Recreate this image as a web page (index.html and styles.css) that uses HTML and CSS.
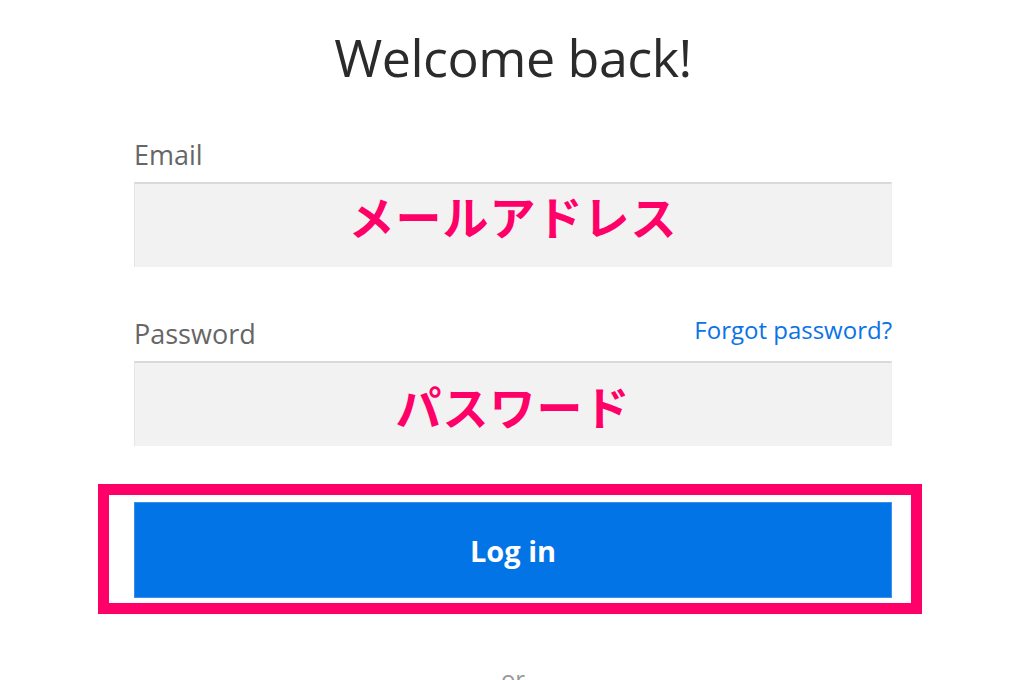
FILE: index.html
```html
<!DOCTYPE html>
<html lang="en">
<head>
<meta charset="utf-8">
<title>Welcome back</title>
<link rel="stylesheet" href="styles.css">
</head>
<body>
<main class="page">
  <div class="form">
    <h1 class="title">Welcome back!</h1>
    <div class="field">
      <div class="label-row"><label class="label">Email</label></div>
      <div class="input"><span class="hint">メールアドレス</span></div>
    </div>
    <div class="field field-pw">
      <div class="label-row">
        <label class="label">Password</label>
        <a class="forgot" href="#">Forgot password?</a>
      </div>
      <div class="input input-pw"><span class="hint">パスワード</span></div>
    </div>
    <div class="submit-wrap">
      <button class="btn" type="button">Log in</button>
      <span class="highlight"></span>
    </div>
    <div class="or">or</div>
  </div>
</main>
</body>
</html>
```
FILE: styles.css
```css
html, body {
  margin: 0;
  padding: 0;
  background: #ffffff;
}
body {
  width: 1020px;
  height: 680px;
  overflow: hidden;
  font-family: "Open Sans", "Noto Sans", sans-serif;
}
.page {
  padding-left: 134px;
}
.form {
  width: 758px;
  display: flex;
  flex-direction: column;
}
.title {
  margin: 22px 0 0;
  text-align: center;
  font-weight: 400;
  font-size: 52px;
  line-height: 70px;
  color: #2b2b2b;
  letter-spacing: -0.5px;
}
.field {
  margin-top: 44px;
  display: flex;
  flex-direction: column;
}
.field-pw {
  margin-top: 48px;
}
.label-row {
  display: flex;
  justify-content: space-between;
  align-items: baseline;
  height: 38px;
}
.label {
  font-size: 27px;
  color: #666666;
  line-height: 38px;
}
.forgot {
  font-size: 24px;
  color: #0a73e6;
  text-decoration: none;
  line-height: 38px;
  position: relative;
  top: -5px;
}
.input {
  margin-top: 8px;
  height: 85px;
  box-sizing: border-box;
  background: #f2f2f2;
  border-top: 2px solid #d9d9d9;
  border-left: 1px solid #e6e6e6;
  border-right: 1px solid #f0f0f0;
  display: flex;
  align-items: center;
  justify-content: center;
  padding-bottom: 22px;
}
.input-pw {
  padding-bottom: 0;
}
.hint {
  font-family: "Noto Sans CJK JP", sans-serif;
  font-weight: 700;
  font-size: 46px;
  color: #ff0068;
  line-height: 1;
  letter-spacing: 1px;
}
.submit-wrap {
  position: relative;
  margin-top: 56px;
}
.btn {
  display: block;
  width: 100%;
  height: 96px;
  border: 1px solid #3a8ff0;
  background: #0274e6;
  color: #ffffff;
  font-family: "Open Sans", "Noto Sans", sans-serif;
  font-weight: 700;
  font-size: 29px;
  padding: 0;
}
.highlight {
  position: absolute;
  top: -18px;
  left: -36px;
  right: -30px;
  bottom: -16px;
  border: 11px solid #ff0068;
  pointer-events: none;
}
.or {
  margin-top: 64px;
  text-align: center;
  font-size: 24px;
  color: #999999;
}
```
